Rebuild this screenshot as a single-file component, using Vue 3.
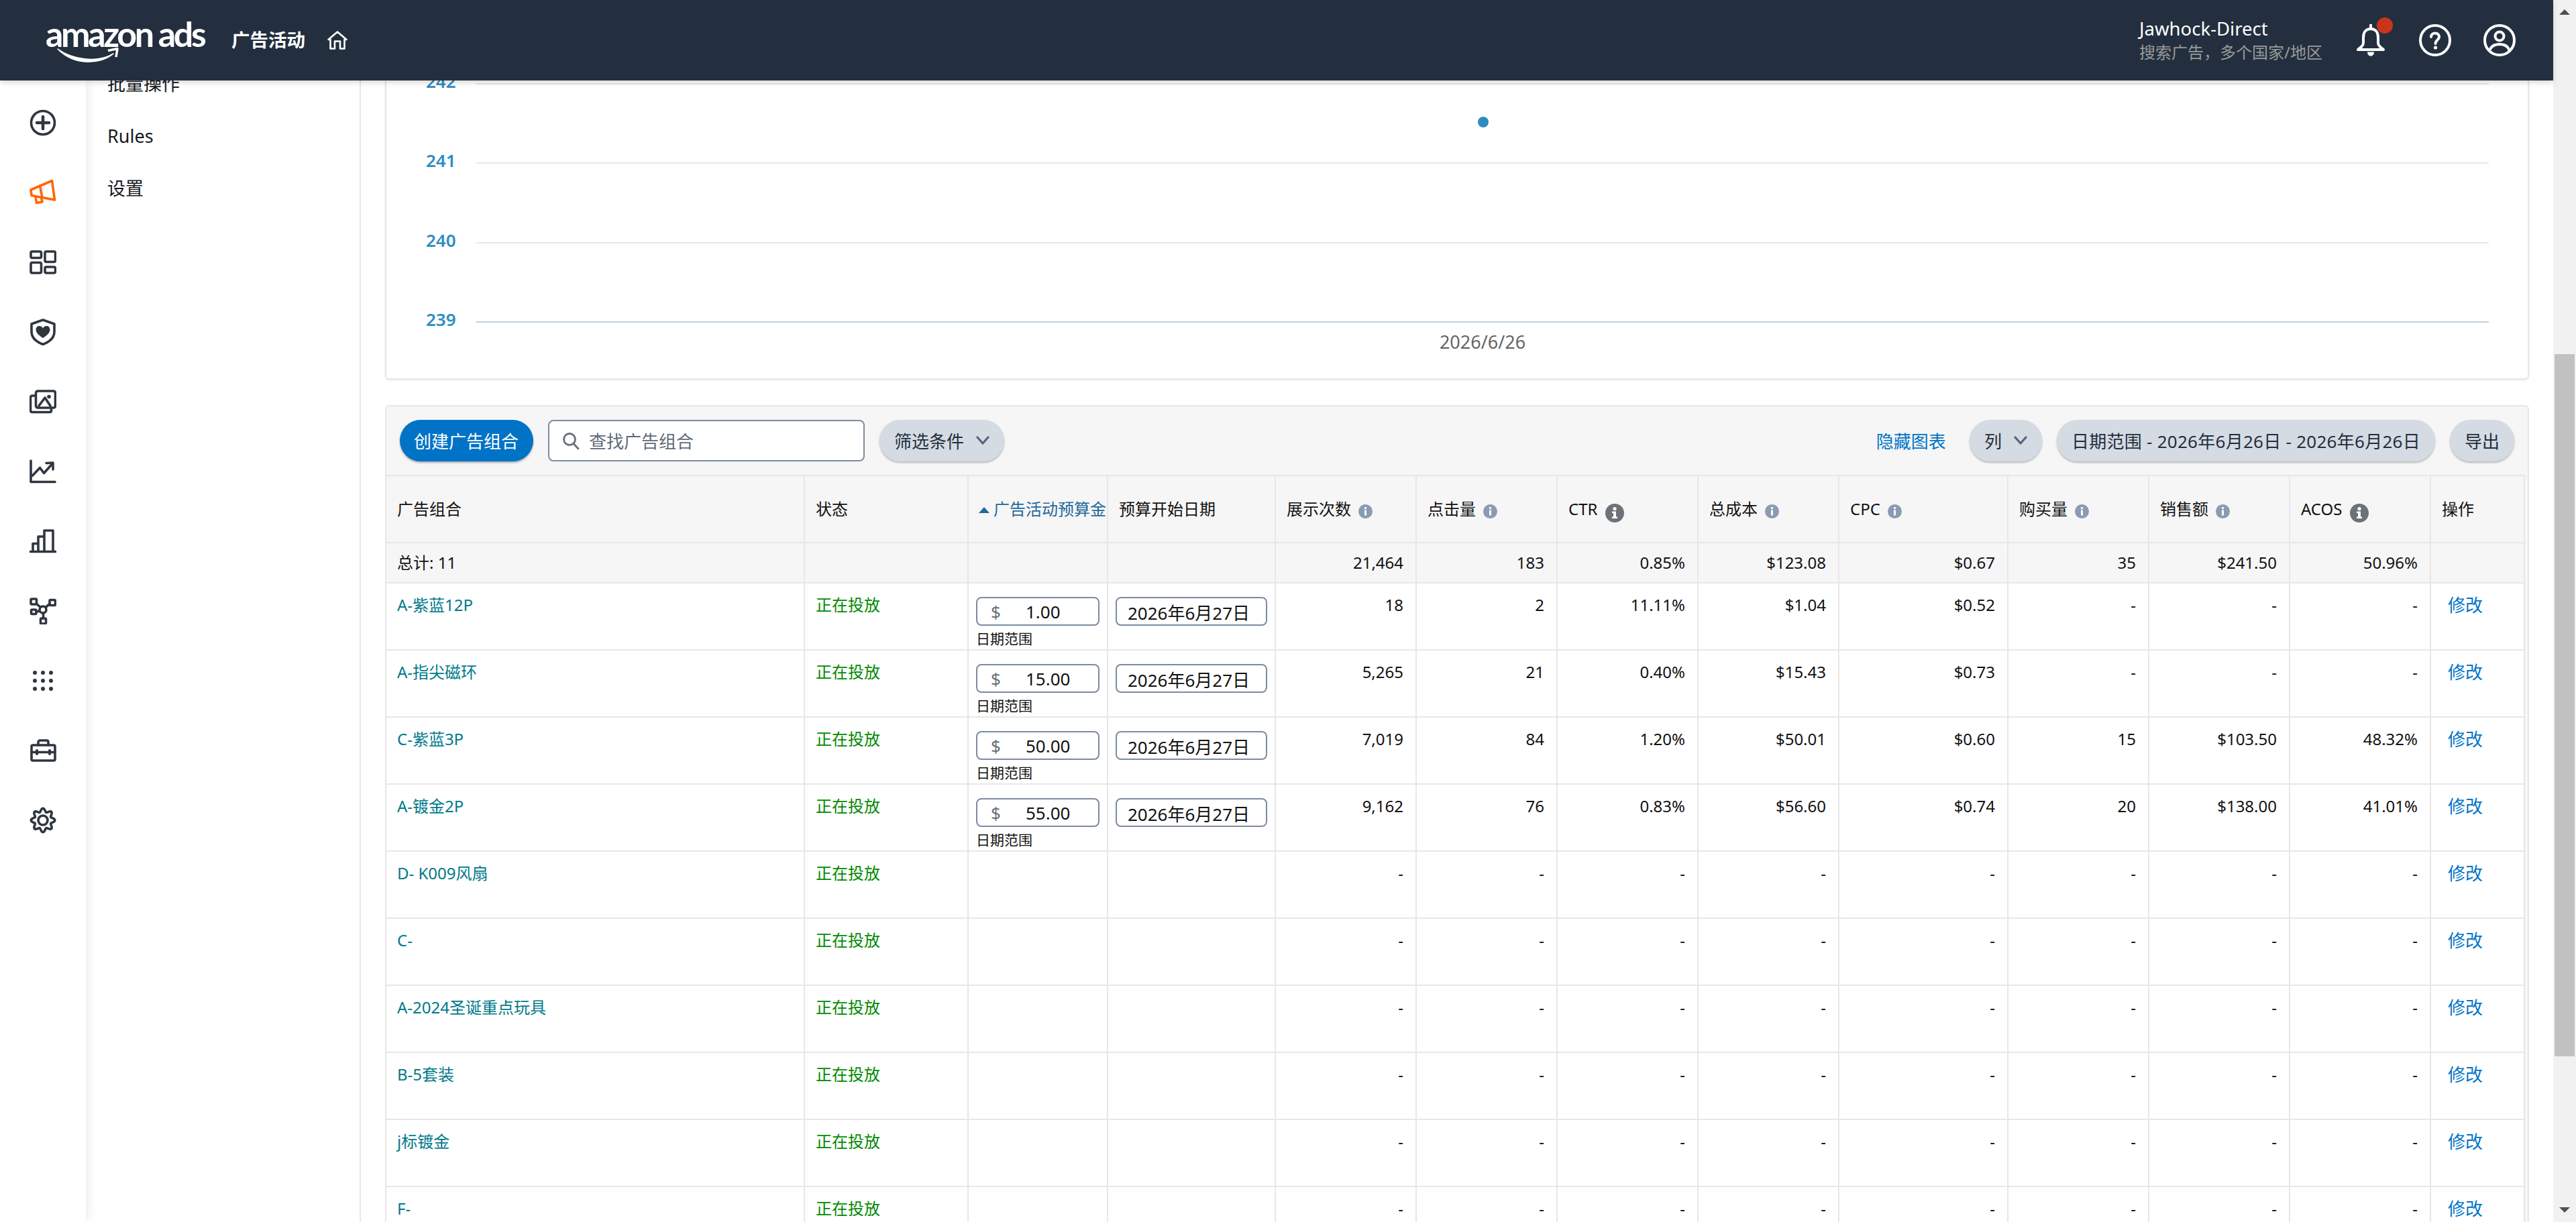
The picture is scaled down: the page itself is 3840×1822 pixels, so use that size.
<script setup>
const navItems = ['批量操作', 'Rules', '设置']

const chartRows = [242, 241, 240]

const columns = [
  { label: '展示次数', info: 'soft' },
  { label: '点击量', info: 'soft' },
  { label: 'CTR', info: 'hard' },
  { label: '总成本', info: 'soft' },
  { label: 'CPC', info: 'soft' },
  { label: '购买量', info: 'soft' },
  { label: '销售额', info: 'soft' },
  { label: 'ACOS', info: 'hard' }
]

const totals = ['21,464', '183', '0.85%', '$123.08', '$0.67', '35', '$241.50', '50.96%']

const empty = ['-', '-', '-', '-', '-', '-', '-', '-']

const rows = [
  { name: 'A-紫蓝12P', budget: '1.00', stats: ['18', '2', '11.11%', '$1.04', '$0.52', '-', '-', '-'] },
  { name: 'A-指尖磁环', budget: '15.00', stats: ['5,265', '21', '0.40%', '$15.43', '$0.73', '-', '-', '-'] },
  { name: 'C-紫蓝3P', budget: '50.00', stats: ['7,019', '84', '1.20%', '$50.01', '$0.60', '15', '$103.50', '48.32%'] },
  { name: 'A-镀金2P', budget: '55.00', stats: ['9,162', '76', '0.83%', '$56.60', '$0.74', '20', '$138.00', '41.01%'] },
  { name: 'D- K009风扇', stats: empty },
  { name: 'C-', stats: empty },
  { name: 'A-2024圣诞重点玩具', stats: empty },
  { name: 'B-5套装', stats: empty },
  { name: 'j标镀金', stats: empty },
  { name: 'F-', stats: empty }
]

// wavy outline for the settings gear
const gearPath = (() => {
  const pts = []
  for (let i = 0; i < 96; i++) {
    const a = (i / 96) * Math.PI * 2
    const r = 15.2 + 2.6 * Math.cos(a * 8)
    pts.push((20 + r * Math.cos(a)).toFixed(2) + ' ' + (20 + r * Math.sin(a)).toFixed(2))
  }
  return 'M' + pts.join('L') + 'Z'
})()
</script>

<template>
  <div class="screen">
    <div class="page">
      <header class="topbar">
        <div class="logo">
          <span class="logo-text">amazon ads</span>
          <svg class="smile" width="100" height="26" viewBox="0 0 100 26">
            <path d="M1 2C22 17 60 24 84 9C66 25 26 28 1 2Z" fill="#fff" stroke="#fff" stroke-width="1.5" stroke-linejoin="round" />
            <path d="M76 4.500L90 1.500L88 14" fill="none" stroke="#fff" stroke-width="3.500" stroke-linejoin="round" />
          </svg>
        </div>
        <span class="product">广告活动</span>
        <svg class="home" width="30" height="28" viewBox="0 0 30 28" fill="none" stroke="#fff" stroke-width="2.600" stroke-linejoin="round">
          <path d="M1.500 13L15 1.500L28.500 13H25.500V26.500H19V15.500H11V26.500H4.500V13Z" />
        </svg>
        <div class="account">
          <div class="account-name">Jawhock-Direct</div>
          <div class="account-sub">搜索广告，多个国家/地区</div>
        </div>
        <div class="bell-wrap">
          <svg width="48" height="48" viewBox="0 0 48 48" fill="none" stroke="#fff" stroke-width="4" stroke-linejoin="round">
            <path d="M24 7C16 7 13 13 13 20V28C13 33 9 34 5 38H43C39 34 35 33 35 28V20C35 13 32 7 24 7Z" />
            <path d="M24 1.500V7" stroke-linecap="round" />
            <path d="M19 41.500H29C29 45 27 47.500 24 47.500S19 45 19 41.500Z" fill="#fff" stroke="none" />
          </svg>
          <span class="bell-dot"></span>
        </div>
        <svg class="top-icon" width="48" height="48" viewBox="0 0 48 48" fill="none" stroke="#fff" stroke-width="4">
          <circle cx="24" cy="24" r="22" />
          <path d="M18 19C18 15.500 20.500 13.500 24 13.500S30 15.500 30 19C30 23.500 24.500 23.500 24.500 29" stroke-linecap="round" />
          <circle cx="24.500" cy="35" r="2.600" fill="#fff" stroke="none" />
        </svg>
        <svg class="top-icon" width="48" height="48" viewBox="0 0 48 48" fill="none" stroke="#fff" stroke-width="4">
          <circle cx="24" cy="24" r="22" />
          <circle cx="24" cy="18" r="6.500" />
          <path d="M9 40C11 33 16 30 24 30S37 33 39 40" />
        </svg>
      </header>

      <div class="body-row">
        <aside class="rail">
          <div class="rail-item">
            <svg class="rail-icon" viewBox="0 0 40 40">
              <circle cx="20" cy="20" r="17.500" />
              <path d="M20 11V29M11 20H29" stroke-width="4.500" />
            </svg>
          </div>
          <div class="rail-item">
            <svg class="rail-icon orange" viewBox="0 0 40 40">
              <path d="M2 16L33.500 2.500L37.500 31L3 24.500Z" />
              <path d="M15.500 10L19 27.500" />
              <path d="M9 26.500L10.500 35.500L19 34L17.500 28" />
            </svg>
          </div>
          <div class="rail-item">
            <svg class="rail-icon" viewBox="0 0 40 40">
              <rect x="2" y="4" width="15.500" height="9.500" rx="2" />
              <rect x="2" y="20.500" width="15.500" height="15.500" rx="2" />
              <rect x="23" y="4" width="15.500" height="15.500" rx="2" />
              <rect x="23" y="27" width="15.500" height="9" rx="2" />
            </svg>
          </div>
          <div class="rail-item">
            <svg class="rail-icon" viewBox="0 0 40 40">
              <path d="M20 2L37 8V20C37 29 29 35 20 38.500C11 35 3 29 3 20V8Z" />
              <path d="M20 29C14 25 9.500 21 9.500 16.500C9.500 13 12 11 14.500 11C17 11 19 12.500 20 14.500C21 12.500 23 11 25.500 11C28 11 30.500 13 30.500 16.500C30.500 21 26 25 20 29Z" class="solid" />
            </svg>
          </div>
          <div class="rail-item">
            <svg class="rail-icon" viewBox="0 0 40 40">
              <rect x="9.500" y="4" width="29" height="25" rx="3" />
              <path d="M9 11H4C2.500 11 1.500 12 1.500 13.500V33C1.500 34.500 2.500 35.500 4 35.500H30C31.500 35.500 32.500 34.500 32.500 33V29" />
              <path d="M14 26L23 14L31 26" />
              <circle cx="29" cy="12.500" r="2.800" class="solid" />
            </svg>
          </div>
          <div class="rail-item">
            <svg class="rail-icon" viewBox="0 0 40 40">
              <path d="M2 4V35.500H38" />
              <path d="M4.500 26L15.500 14.500L21.500 22.500L33 9.500" />
              <path d="M25 7.500L35 7L35 17" />
            </svg>
          </div>
          <div class="rail-item">
            <svg class="rail-icon" viewBox="0 0 40 40">
              <path d="M1 35.500H39" />
              <path d="M5 35V23.500H13V35M13 35V13H22V35M22 35V4H35V35" />
            </svg>
          </div>
          <div class="rail-item">
            <svg class="rail-icon" viewBox="0 0 40 40">
              <circle cx="20" cy="18" r="5" />
              <rect x="2" y="2" width="8.500" height="8" rx="1.500" />
              <rect x="30" y="3.500" width="8.500" height="8" rx="1.500" />
              <rect x="2.500" y="18" width="7.500" height="6.500" rx="1.500" />
              <rect x="16.500" y="31" width="8" height="8" rx="1.500" />
              <path d="M10 9L16.500 14.500M30 9.500L24 14.500M10 20.500H15M20.500 23V31" />
            </svg>
          </div>
          <div class="rail-item">
            <svg class="rail-icon dots" viewBox="0 0 40 40">
              <g v-for="y in [8, 20, 32]" :key="y">
                <circle v-for="x in [8, 20, 32]" :key="x" :cx="x" :cy="y" r="3" />
              </g>
            </svg>
          </div>
          <div class="rail-item">
            <svg class="rail-icon" viewBox="0 0 40 40">
              <rect x="3" y="12" width="35" height="23" rx="2" />
              <path d="M13 12V7.500C13 6 14 5 15.500 5H25.500C27 5 28 6 28 7.500V12" />
              <path d="M3 22.500H38" />
              <path d="M11 20V25M30 20V25" stroke-width="4" />
            </svg>
          </div>
          <div class="rail-item">
            <svg class="rail-icon" viewBox="0 0 40 40">
              <path :d="gearPath" />
              <circle cx="20" cy="20" r="7" />
            </svg>
          </div>
        </aside>

        <nav class="side-nav">
          <div v-for="item in navItems" :key="item" class="nav-item">{{ item }}</div>
        </nav>

        <main class="main">
          <section class="chart-card">
            <div class="chart">
              <div v-for="n in chartRows" :key="n" class="chart-row">
                <span class="chart-label">{{ n }}</span>
                <div class="chart-line"></div>
              </div>
              <div class="chart-row last">
                <span class="chart-label">239</span>
                <div class="chart-line base">
                  <span class="chart-date">2026/6/26</span>
                </div>
              </div>
              <span class="chart-point"></span>
            </div>
          </section>

          <section class="table-card">
            <div class="toolbar">
              <button type="button" class="btn primary">创建广告组合</button>
              <div class="search">
                <svg width="28" height="28" viewBox="0 0 28 28" fill="none" stroke="#687078" stroke-width="2.800">
                  <circle cx="12" cy="12" r="8.500" />
                  <path d="M18 18.500L25 26" stroke-linecap="round" />
                </svg>
                <span>查找广告组合</span>
              </div>
              <button type="button" class="btn chip">
                筛选条件
                <svg class="chevron" width="20" height="14" viewBox="0 0 20 14"><path d="M2 2L10 11L18 2" /></svg>
              </button>
              <a class="hide-chart">隐藏图表</a>
              <button type="button" class="btn chip">
                列
                <svg class="chevron" width="20" height="14" viewBox="0 0 20 14"><path d="M2 2L10 11L18 2" /></svg>
              </button>
              <button type="button" class="btn chip range">日期范围 - 2026年6月26日 - 2026年6月26日</button>
              <button type="button" class="btn chip">导出</button>
            </div>

            <table class="grid">
              <colgroup>
                <col v-for="n in 13" :key="n" />
              </colgroup>
              <thead>
                <tr class="head-row">
                  <th>广告组合</th>
                  <th>状态</th>
                  <th class="sorted"><i class="sort-arrow"></i>广告活动预算金</th>
                  <th>预算开始日期</th>
                  <th v-for="col in columns" :key="col.label">
                    {{ col.label }}
                    <svg v-if="col.info === 'soft'" class="info soft" width="21" height="21" viewBox="0 0 21 21">
                      <circle cx="10.500" cy="10.500" r="10.500" fill="#8a9bb3" />
                      <circle cx="10.500" cy="5.500" r="1.700" fill="#fff" />
                      <rect x="9" y="8.500" width="3" height="8" fill="#fff" />
                    </svg>
                    <svg v-else class="info hard" width="28" height="28" viewBox="0 0 28 28">
                      <circle cx="14" cy="14" r="14" fill="#6c7278" />
                      <circle cx="14" cy="7.500" r="2.600" fill="#fff" />
                      <path d="M10 11.500H16V19.500H18V22H10V19.500H12V14H10Z" fill="#fff" />
                    </svg>
                  </th>
                  <th>操作</th>
                </tr>
                <tr class="total-row">
                  <td>总计: 11</td>
                  <td></td>
                  <td></td>
                  <td></td>
                  <td v-for="(t, i) in totals" :key="i" class="num">{{ t }}</td>
                  <td></td>
                </tr>
              </thead>
              <tbody>
                <tr v-for="row in rows" :key="row.name" class="data-row">
                  <td class="name">{{ row.name }}</td>
                  <td class="status">正在投放</td>
                  <td class="budget-cell">
                    <template v-if="row.budget">
                      <div class="field money"><span class="dollar">$</span>{{ row.budget }}</div>
                      <div class="range-note">日期范围</div>
                    </template>
                  </td>
                  <td class="date-cell">
                    <div v-if="row.budget" class="field date">2026年6月27日</div>
                  </td>
                  <td v-for="(s, i) in row.stats" :key="i" class="num">{{ s }}</td>
                  <td class="edit">修改</td>
                </tr>
              </tbody>
            </table>
          </section>
        </main>
      </div>
    </div>

    <div class="scrollbar">
      <div class="arrow-box"><span class="arrow up"></span></div>
      <div class="thumb"></div>
      <div class="arrow-box bottom"><span class="arrow down"></span></div>
    </div>
  </div>
</template>

<style>
html,
body {
  margin: 0;
  overflow: hidden;
  background: #fff;
}
</style>

<style scoped>
.screen {
  display: flex;
  height: 100vh;
  font-family: "Noto Sans", "Noto Sans CJK SC", sans-serif;
  font-size: 24px;
  color: #111;
  background: #fff;
}

.page {
  flex: 1;
  min-width: 0;
  display: flex;
  flex-direction: column;
}

/* top bar */
.topbar {
  position: relative;
  z-index: 3;
  flex: none;
  height: 120px;
  box-sizing: border-box;
  display: flex;
  align-items: center;
  padding: 0 56px 0 68px;
  background: #232f3f;
  color: #fff;
  box-shadow: 0 3px 8px rgba(0, 0, 0, 0.16);
}

.logo {
  width: 277px;
  display: flex;
  flex-direction: column;
  margin-top: 3px;
}

.logo-text {
  font-family: Lato, "Noto Sans", sans-serif;
  font-weight: 700;
  font-size: 52px;
  line-height: 46px;
  letter-spacing: -3.400px;
  white-space: nowrap;
}

.smile {
  margin: -2px 0 0 17px;
}

.product {
  font-size: 27.500px;
  font-weight: 600;
  line-height: 40px;
}

.home {
  margin-left: 33px;
}

.account {
  margin-left: auto;
  margin-right: 48px;
}

.account-name {
  font-size: 27.500px;
  line-height: 36px;
}

.account-sub {
  font-size: 24px;
  line-height: 34px;
  color: #999;
}

.bell-wrap {
  position: relative;
  width: 48px;
  height: 48px;
}

.bell-dot {
  position: absolute;
  left: 33px;
  top: -10px;
  width: 24px;
  height: 24px;
  border-radius: 50%;
  background: #c9341d;
}

.top-icon {
  margin-left: 48px;
}

/* left side */
.body-row {
  flex: 1;
  min-height: 0;
  display: flex;
}

.rail {
  position: relative;
  z-index: 2;
  flex: none;
  width: 128px;
  box-sizing: border-box;
  padding-top: 11px;
  background: #fff;
  box-shadow: 4px 0 14px rgba(0, 0, 0, 0.07);
}

.rail-item {
  height: 104px;
  display: flex;
  align-items: center;
  justify-content: center;
}

.rail-icon {
  width: 40px;
  height: 40px;
  fill: none;
  stroke: #2f3640;
  stroke-width: 3.600;
  stroke-linejoin: round;
  stroke-linecap: round;
}

.rail-icon.orange {
  stroke: #ff6600;
}

.rail-icon .solid,
.rail-icon.dots {
  fill: #2f3640;
  stroke: none;
}

.side-nav {
  flex: none;
  width: 410px;
  box-sizing: border-box;
  padding: 0 0 0 32px;
  border-right: 2px solid #e7e7e7;
  overflow: hidden;
}

.nav-item {
  font-size: 27px;
  line-height: 78px;
  color: #16191f;
}

.nav-item:first-child {
  margin-top: -34px;
}

/* chart */
.main {
  flex: 1;
  min-width: 0;
  padding: 0 36px;
  overflow: hidden;
}

.chart-card {
  border: 2px solid #e7e7e7;
  border-top: none;
  border-radius: 0 0 6px 6px;
  box-shadow: 0 1px 3px rgba(0, 0, 0, 0.1);
  padding: 4px 58px 0 59px;
  height: 446px;
  box-sizing: border-box;
}

.chart {
  position: relative;
}

.chart-row {
  display: flex;
  height: 118.300px;
}

.chart-row.last {
  height: 66px;
}

.chart-label {
  width: 75px;
  flex: none;
  margin-top: -22px;
  height: 38px;
  line-height: 38px;
  font-size: 26px;
  font-weight: 600;
  color: #2d8ebf;
}

.chart-line {
  flex: 1;
  height: 2px;
  background: #e6eaea;
  display: flex;
  justify-content: center;
}

.chart-line.base {
  background: #c0d0e0;
}

.chart-date {
  margin-top: 15px;
  height: 32px;
  line-height: 32px;
  font-size: 27px;
  color: #666;
}

.chart-point {
  position: absolute;
  left: 1568px;
  top: 50px;
  width: 16px;
  height: 16px;
  border-radius: 50%;
  background: #2e8bc0;
}

/* table card */
.table-card {
  margin-top: 38px;
  border: 2px solid #e7e7e7;
  border-bottom: none;
  border-radius: 6px 6px 0 0;
  background: #f6f6f6;
}

.toolbar {
  display: flex;
  align-items: center;
  gap: 22px;
  height: 102px;
  box-sizing: border-box;
  padding: 0 20px;
  border-bottom: 0;
}

.btn {
  flex: none;
  height: 62px;
  padding: 0 22px;
  display: flex;
  align-items: center;
  border: none;
  border-radius: 31px;
  font-family: inherit;
  font-size: 26px;
  white-space: nowrap;
}

.btn.primary {
  width: 199px;
  padding: 0 21px;
  background: #0073c7;
  color: #fff;
  box-shadow: 0 2px 3px rgba(0, 0, 0, 0.3);
}

.btn.chip {
  background: #d5dbe3;
  color: #232f3e;
  box-shadow: 0 2px 3px rgba(0, 0, 0, 0.25);
}

.btn.range {
  letter-spacing: 0.270px;
}

.chevron {
  margin-left: 18px;
  fill: none;
  stroke: #56657a;
  stroke-width: 3.200;
  stroke-linecap: round;
  stroke-linejoin: round;
}

.search {
  flex: none;
  width: 472px;
  height: 62px;
  box-sizing: border-box;
  border: 2.500px solid #7d8ba0;
  border-radius: 8px;
  background: #fff;
  display: flex;
  align-items: center;
  gap: 13px;
  padding-left: 18px;
  font-size: 26px;
  color: #5f6b78;
}

.hide-chart {
  margin-left: auto;
  margin-right: 13px;
  font-size: 26px;
  color: #0073c7;
}

/* table */
.grid {
  width: 3188px;
  table-layout: fixed;
  border-collapse: separate;
  border-spacing: 0;
  background: #fff;
  border-top: 2px solid #e7e7e7;
}

.grid col:nth-child(1) { width: 624px; }
.grid col:nth-child(2) { width: 244px; }
.grid col:nth-child(3) { width: 208px; }
.grid col:nth-child(4) { width: 250px; }
.grid col:nth-child(n+5) { width: 210px; }
.grid col:nth-child(9) { width: 252px; }
.grid col:nth-child(13) { width: 140px; }

.grid th,
.grid td {
  box-sizing: border-box;
  padding: 0 18px 0 16px;
  border-right: 2px solid #e7e7e7;
  border-bottom: 2px solid #e7e7e7;
  line-height: 32px;
  font-weight: 400;
  text-align: left;
  white-space: nowrap;
  overflow: hidden;
}

.head-row th {
  height: 100px;
  background: #f6f6f6;
  vertical-align: middle;
}

.total-row td {
  height: 60px;
  background: #f6f6f6;
}

.data-row td {
  height: 100px;
  vertical-align: top;
  padding-top: 16px;
}

.grid td.num {
  text-align: right;
}

.grid th.sorted {
  padding: 0 0 0 15px;
  color: #23689b;
  overflow: hidden;
}

.sort-arrow {
  display: inline-block;
  width: 0;
  height: 0;
  margin-right: 6px;
  vertical-align: 3px;
  border-left: 8px solid transparent;
  border-right: 8px solid transparent;
  border-bottom: 9px solid #23689b;
}

.info {
  margin-left: 5px;
}

.info.soft {
  vertical-align: -5px;
}

.info.hard {
  vertical-align: middle;
  transform: translateY(4px);
}

.name {
  color: #00798a;
}

.status {
  color: #008a00;
}

.grid td.edit {
  padding-left: 25px;
  color: #0073c7;
  font-size: 26px;
}

.grid td.budget-cell,
.grid td.date-cell {
  padding: 20px 0 0 11px;
}

.field {
  box-sizing: border-box;
  height: 43px;
  border: 2px solid #7d8ba0;
  border-radius: 8px;
  background: #fff;
  font-size: 26px;
  line-height: 41px;
}

.field.money {
  width: 184px;
  padding-left: 20px;
}

.field.date {
  width: 226px;
  padding: 2px 0 0 16px;
}

.dollar {
  display: inline-block;
  width: 52px;
  color: #687078;
}

.range-note {
  margin-top: 4px;
  font-size: 21px;
  line-height: 30px;
}

/* browser scrollbar */
.scrollbar {
  flex: none;
  width: 34px;
  display: flex;
  flex-direction: column;
  background: #f1f1f1;
}

.arrow-box {
  height: 36px;
  display: flex;
  align-items: center;
  justify-content: center;
}

.arrow-box.bottom {
  margin-top: auto;
}

.arrow {
  width: 0;
  height: 0;
  border-left: 8px solid transparent;
  border-right: 8px solid transparent;
}

.arrow.up {
  border-bottom: 8px solid #505050;
}

.arrow.down {
  border-top: 8px solid #505050;
}

.thumb {
  width: 30px;
  height: 1047px;
  margin: 492px 0 0 2px;
  background: #c1c1c1;
}
</style>
